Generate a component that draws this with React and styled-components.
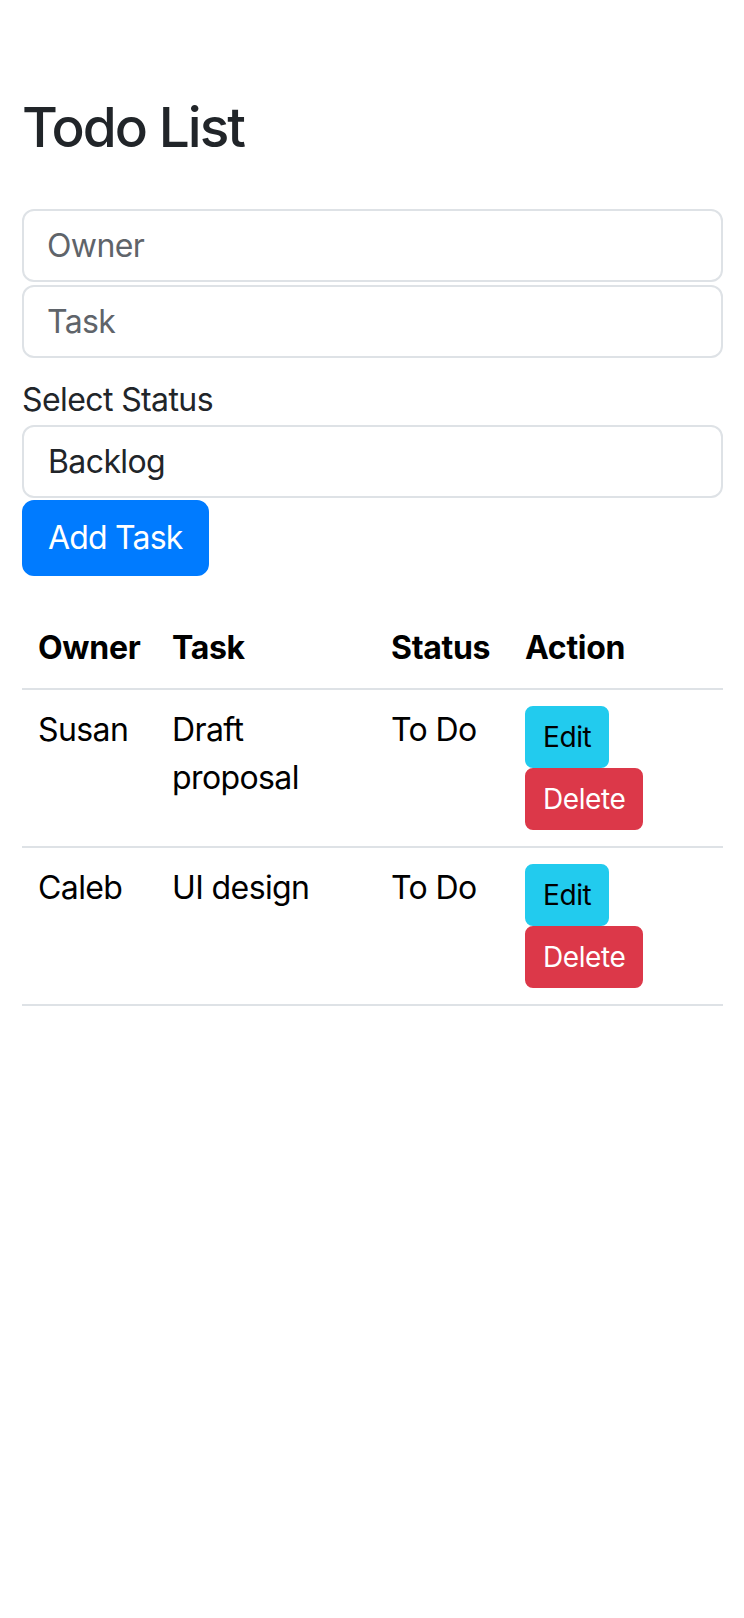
import React from "react";
import styled, { createGlobalStyle } from "styled-components";

const GlobalStyle = createGlobalStyle`
  html, body {
    margin: 0;
    padding: 0;
    background: #ffffff;
  }
  body {
    font-family: "Inter", "Liberation Sans", sans-serif;
    color: #212529;
    letter-spacing: -0.6px;
  }
  *, *::before, *::after {
    box-sizing: border-box;
  }
`;

const Page = styled.main`
  padding: 94px 21px 40px 22px;
`;

const Title = styled.h1`
  margin: 0 0 49px;
  font-size: 55px;
  line-height: 66px;
  font-weight: 500;
  color: #212529;
  letter-spacing: -2px;
`;

const Form = styled.form`
  display: flex;
  flex-direction: column;
`;

const TextInput = styled.input`
  display: block;
  width: 100%;
  height: 73px;
  margin: 0 0 ${(p) => p.$gap || 0}px;
  padding: 0 23px;
  font-family: inherit;
  font-size: 32px;
  letter-spacing: -0.6px;
  color: #212529;
  background: #fff;
  border: 2px solid #dee2e6;
  border-radius: 12px;
  outline: none;

  &::placeholder {
    color: #5f646a;
    opacity: 1;
  }
`;

const Label = styled.label`
  display: block;
  margin: 18px 0 1px;
  font-size: 32px;
  line-height: 48px;
  color: #212529;
`;

const Select = styled.select`
  display: block;
  width: 100%;
  height: 73px;
  padding: 0 24px;
  font-family: inherit;
  font-size: 32px;
  letter-spacing: -0.6px;
  color: #212529;
  background: #fff;
  border: 2px solid #dee2e6;
  border-radius: 12px;
  appearance: none;
  -webkit-appearance: none;
  outline: none;
`;

const Button = styled.button`
  display: inline-block;
  font-family: inherit;
  font-weight: 400;
  letter-spacing: ${(p) => (p.$small ? "-0.4px" : "-0.8px")};
  cursor: pointer;
  border: 2px solid ${(p) => p.$bg};
  background: ${(p) => p.$bg};
  color: ${(p) => p.$fg};
  font-size: ${(p) => (p.$small ? 28 : 32)}px;
  line-height: ${(p) => (p.$small ? 42 : 48)}px;
  padding: ${(p) => (p.$small ? "8px 16px" : "12px 24px")};
  border-radius: ${(p) => (p.$small ? 8 : 12)}px;
`;

const SubmitButton = styled(Button)`
  align-self: flex-start;
  margin-top: 2px;
`;

const Table = styled.table`
  width: 100%;
  margin-top: 32px;
  border-collapse: collapse;
  table-layout: fixed;
  color: #000;
`;

const HeadCell = styled.th`
  padding: 16px;
  font-size: 32px;
  line-height: 48px;
  font-weight: 700;
  text-align: left;
  letter-spacing: -0.3px;
  border-bottom: 2px solid #dee2e6;
`;

const Cell = styled.td`
  padding: 16px;
  font-size: 32px;
  line-height: 48px;
  vertical-align: top;
  border-bottom: 2px solid #dee2e6;
`;

const Actions = styled.div`
  display: flex;
  flex-wrap: wrap;
  align-items: flex-start;
`;

const tasks = [
  { owner: "Susan", task: "Draft proposal", status: "To Do" },
  { owner: "Caleb", task: "UI design", status: "To Do" },
];

export default function App() {
  return (
    <>
      <GlobalStyle />
      <Page>
        <Title>Todo List</Title>
        <Form onSubmit={(e) => e.preventDefault()}>
          <TextInput placeholder="Owner" $gap={3} />
          <TextInput placeholder="Task" />
          <Label htmlFor="status">Select Status</Label>
          <Select id="status" defaultValue="Backlog">
            <option>Backlog</option>
            <option>To Do</option>
            <option>In Progress</option>
            <option>Done</option>
          </Select>
          <SubmitButton type="submit" $bg="#007bff" $fg="#ffffff">
            Add Task
          </SubmitButton>
        </Form>
        <Table>
          <colgroup>
            <col style={{ width: 134 }} />
            <col style={{ width: 219 }} />
            <col style={{ width: 134 }} />
            <col />
          </colgroup>
          <thead>
            <tr>
              <HeadCell>Owner</HeadCell>
              <HeadCell>Task</HeadCell>
              <HeadCell>Status</HeadCell>
              <HeadCell>Action</HeadCell>
            </tr>
          </thead>
          <tbody>
            {tasks.map((t) => (
              <tr key={t.owner}>
                <Cell>{t.owner}</Cell>
                <Cell>{t.task}</Cell>
                <Cell>{t.status}</Cell>
                <Cell>
                  <Actions>
                    <Button $small $bg="#22cbee" $fg="#000000">
                      Edit
                    </Button>
                    <Button $small $bg="#dc3849" $fg="#ffffff">
                      Delete
                    </Button>
                  </Actions>
                </Cell>
              </tr>
            ))}
          </tbody>
        </Table>
      </Page>
    </>
  );
}
